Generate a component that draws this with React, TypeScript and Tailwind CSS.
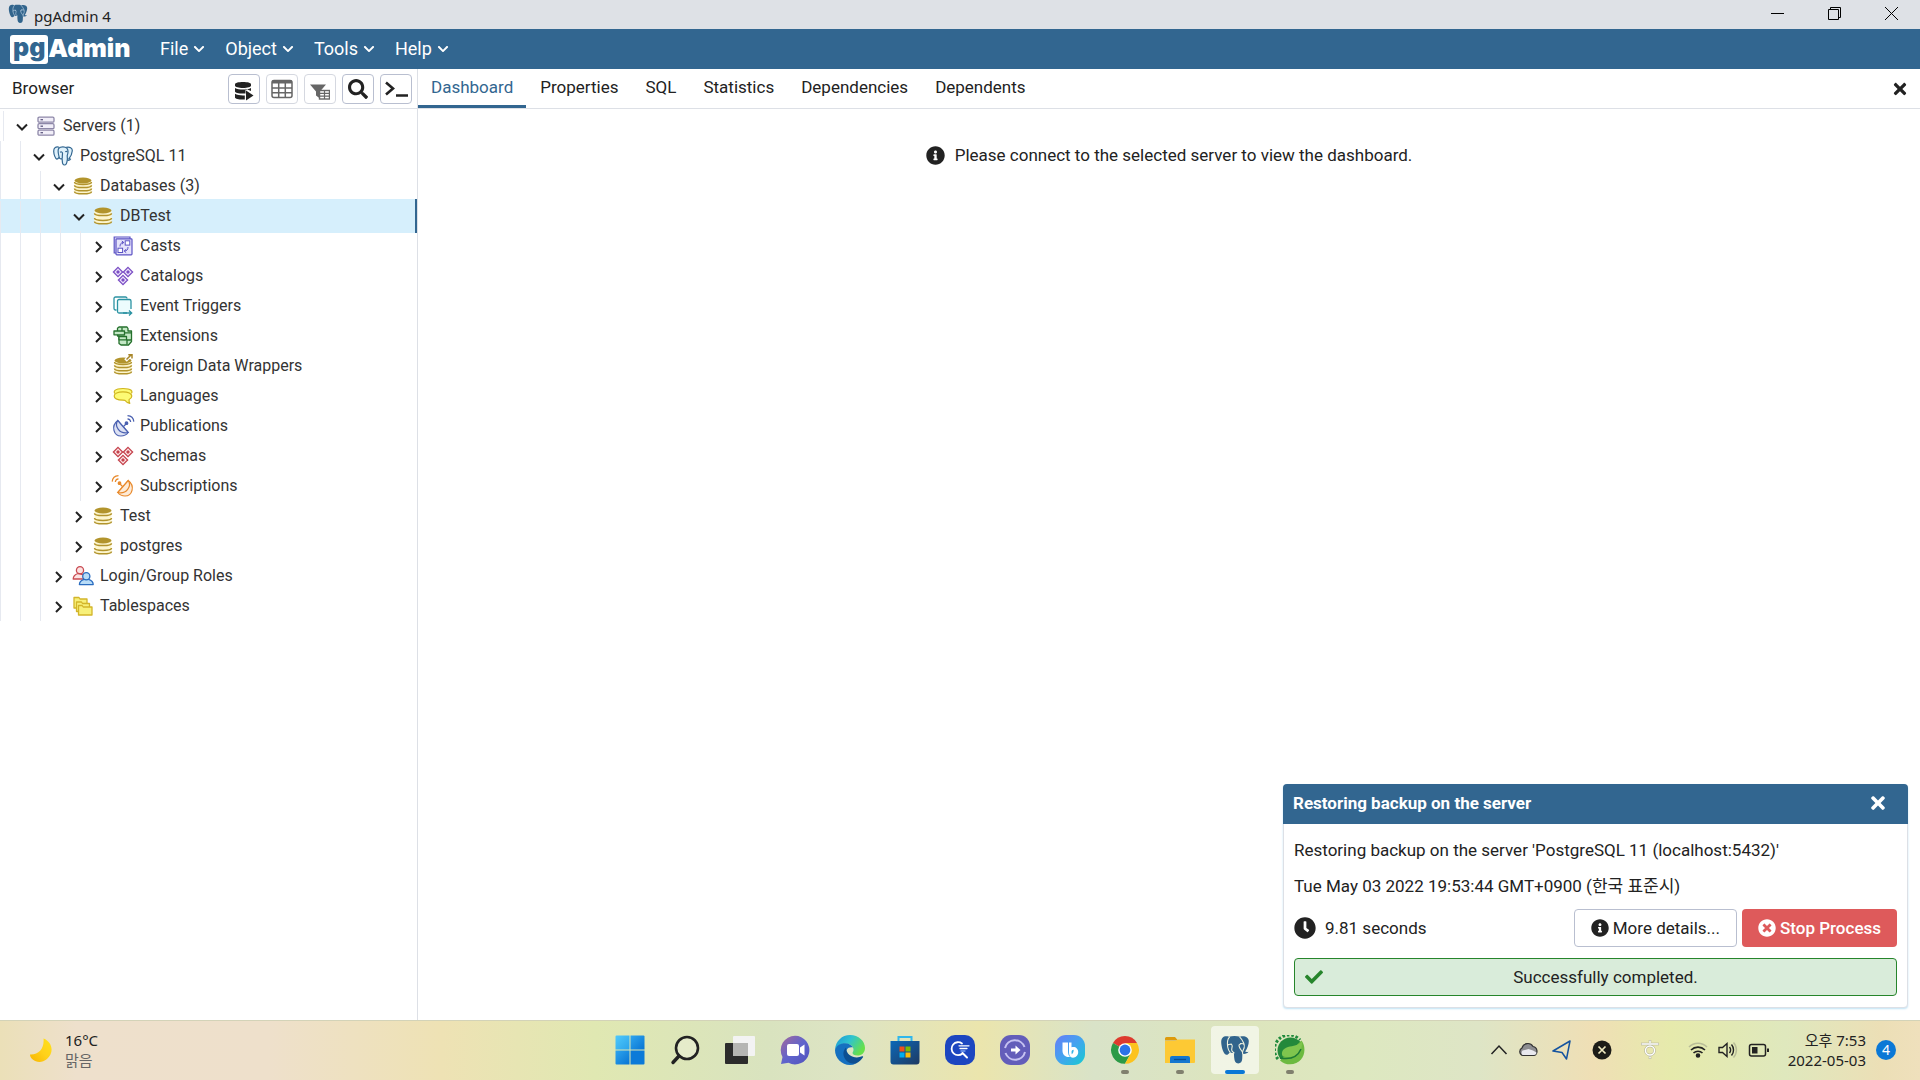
import React from "react";
import {
  FaCheck,
  FaChevronDown,
  FaClock,
  FaInfoCircle,
  FaSearch,
  FaTimes,
  FaTimesCircle,
} from "react-icons/fa";

const svg = "h-5 w-5 overflow-visible";

function ServersIcon() {
  return (
    <svg viewBox="0 0 20 20" className={svg} fill="#f1eef8" stroke="#8d87a8" strokeWidth="1.3">
      {[1.2, 7.7, 14.2].map((y) => (
        <g key={y}>
          <rect x="2" y={y} width="16" height="5" rx="1.2" />
          <path d={`M4.5 ${y + 2.5}h2.5`} stroke="#5f5980" />
        </g>
      ))}
    </svg>
  );
}

function ElephantIcon() {
  return (
    <svg viewBox="0 0 20 20" className={svg} fill="#dff1fb" stroke="#336791" strokeWidth="1.2" strokeLinejoin="round">
      <path d="M6.2 1.2C3 .2.6 1.700.7 5.200c.1 3 1.500 7.600 3.100 7.900 1 .2 1.800-1 2.700-2.100M13.200 1.300c3.600-.7 6.300.6 6.100 3.500-.2 2.900-2 6.500-3.500 8.200l1.800.1c-.5 1-1.800 1.400-3.300 1.200" />
      <path d="M5.800 2.200C7.500.6 12 .3 13.800 2.200c1.600 1.800 1.400 4.800.4 7.600l.2 3.200c-.3 2.800-.5 5.700-2.500 6-2 .2-2.500-1.600-2.600-4l-.2-2.500c-1 .8-2.500.3-2.900-1.200C5.500 8.500 4.200 4.500 5.800 2.200z" />
      <path d="M7 6.200c1.200-.7 2.500-.2 2.500 1 0 1.600-.3 2.800-.2 5M12.300 5.800c.8-.5 1.600-.3 2 .2" fill="none" />
    </svg>
  );
}

function SolidElephant({ className, seam }: { className: string; seam: string }) {
  return (
    <svg viewBox="0 0 30 30" className={className} strokeLinejoin="round" strokeLinecap="round">
      <path
        d="M9 1.800C4.500.3 1.200 2.300 1.200 7c0 4.500 2.300 12.300 5 12.800 1.500.3 2.600-1.200 3.800-2.600 1 .8 2.500 1 3.800.6.3 1.200.2 3 .4 5 .3 3.700 1.500 5.700 4 5.700 2.600 0 3.800-1.600 4-4.400.2-1.900 0-3.900.3-5.300 2.600.4 5-.4 6-2-1.200.3-2.700.3-3.300-.2 2-3 3.700-7.300 3.600-10.600C28.600 2.500 24.500.3 20 1.800c-3.500-1-7.500-1-11 0z"
        fill="#31648c"
      />
      <g fill="none" stroke={seam} strokeWidth="1.100">
        <path d="M9.500 2.200C6.800 4.500 7.300 9 7.700 12c.3 2 1 3.500 2.300 5.200M19.800 2.200c3.300 3.300 5.200 8 4.400 10.600-.6 1.600-1.500 2.700-1.700 4.700 0 1 .2 1.300.2 1.300" />
        <path d="M7.500 10.200c2-1.600 4.500-1.200 4.700.5.200 2-1.200 3.500-.2 5.300.5 1 1.500 1.400 2 1.800M19 10c1-1.200 3.300-1.700 4.800-1M19 10c-.1 2.500 1.500 4.500 3.400 6.800" />
      </g>
      <g fill={seam}>
        <circle cx="11.200" cy="9.300" r=".8" />
        <circle cx="20.700" cy="8.800" r=".8" />
      </g>
    </svg>
  );
}

function DatabaseIcon({ arrow = false, tight = false }: { arrow?: boolean; tight?: boolean }) {
  const rows = tight ? [6, 9.2, 12.4] : [7.2, 12];
  return (
    <svg viewBox="0 0 20 20" className={svg}>
      <path d="M1.500 4.500v11c0 1.300 3.800 2.400 8.500 2.400s8.500-1.100 8.500-2.400v-11z" fill="#fdf6cf" />
      <ellipse cx="10" cy="4.500" rx="8.500" ry="2.900" fill="#b2942c" />
      {rows.map((y) => (
        <path key={y} d={`M1.500 ${y}c0 3.200 17 3.200 17 0`} fill="none" stroke="#b2942c" strokeWidth="1.500" />
      ))}
      <path d="M1.500 15.400c0 3.200 17 3.200 17 0" fill="none" stroke="#b2942c" strokeWidth="1.500" />
      {arrow && (
        <g>
          <path d="M12.500 4.500 17 0" stroke="#fff" strokeWidth="3.500" />
          <path d="M13.500 3.500 18-1M15.300-1.300h3.700v3.700" fill="none" stroke="#a8862a" strokeWidth="1.500" />
        </g>
      )}
    </svg>
  );
}

function CastsIcon() {
  return (
    <svg viewBox="0 0 20 20" className={svg} fill="#e6e4fb" stroke="#5b52c4" strokeWidth="1.200">
      <path d="M3 17H1.200V1H17v2" />
      <rect x="3" y="2.800" width="16" height="16" rx=".8" />
      <g strokeWidth="1">
        <rect x="12.200" y="4.800" width="4.600" height="4.300" fill="#fff" />
        <rect x="5" y="12.200" width="4.600" height="4.300" fill="#fff" />
        <path d="M7 10.500c0-2.500 1-4 3.500-4M8.800 5l2 1.500-2 1.800M15 11c0 2.600-1.200 4-3.600 4M13.200 13.200 11.200 15l2 1.700" fill="none" />
      </g>
    </svg>
  );
}

function DiamondsIcon({ color, tint }: { color: string; tint: string }) {
  return (
    <svg viewBox="0 0 20 20" className={svg}>
      {[
        [5, 6],
        [15, 6],
        [10, 14],
      ].map(([x, y]) => (
        <g key={x}>
          <path d={`M${x} ${y - 4.600}l4.600 4.600-4.600 4.600-4.600-4.600z`} fill={tint} stroke={color} strokeWidth="1.300" />
          <path d={`M${x} ${y - 2}l2 2-2 2-2-2z`} fill={color} />
        </g>
      ))}
    </svg>
  );
}

function EventTriggersIcon() {
  return (
    <svg viewBox="0 0 20 20" className={svg} stroke="#2c93a3" strokeWidth="1.300" fill="none">
      <path d="M3.500 14H2.500A1.500 1.500 0 0 1 1 12.500v-10A1.500 1.500 0 0 1 2.500 1h10A1.500 1.500 0 0 1 14 2.500" />
      <path d="M18 13V5a1.500 1.500 0 0 0-1.500-1.500H6A1.500 1.500 0 0 0 4.500 5v10.500A1.500 1.500 0 0 0 6 17h8" fill="#ecfcfd" />
      <path d="M10 17h8.500M16 14.500l2.700 2.500-2.700 2.500" />
    </svg>
  );
}

function ExtensionsIcon() {
  return (
    <svg viewBox="0 0 20 20" className={svg} stroke="#25702c" strokeWidth="1.300" fill="#c4e8c6" strokeLinejoin="round">
      <path d="M4.500 5V2.200L6 1h8l1 1.500V5h3.500v10.500L15.500 19H8l-2-1.500V10H4.500z" />
      <path d="M1 5h10.500v3.800H1zM6 10.500h7.500v3.300H6zM11.500 6.800h7M18.500 14H14v4.500M9 1.500V5" />
    </svg>
  );
}

function LanguagesIcon() {
  return (
    <svg viewBox="0 0 20 20" className={svg} stroke="#d0b520" strokeWidth="1.200" fill="#fdfb74" strokeLinejoin="round">
      <path d="M2 7.500C.3 6 1 2.500 10 2.500s9.800 3.200 8.400 4.800" />
      <path d="M10 5.800c-5 0-8.800 1.600-8.800 4.200s3.300 4.200 8.800 4.200l2 .1c1.300 1.600 3 2.700 4.800 3.100-.7-1.300-.9-2.600-.7-3.900 1.600-.8 2.700-2 2.700-3.500C18.800 7.400 15 5.800 10 5.800z" />
    </svg>
  );
}

function DishIcon({ color, tint, flip = false }: { color: string; tint: string; flip?: boolean }) {
  return (
    <svg viewBox="0 0 20 20" className={svg}>
      <g transform={flip ? "translate(20 0) scale(-1 1)" : undefined} stroke={color} strokeWidth="1.200" fill="none">
        <path d="M4.800 4.500C-2.500 10 .8 20 8 20c3 0 5.500-1.300 7.200-3.500z" fill={tint} />
        <path d="M4.800 4.500C1 10 6.500 18.500 15.200 16.500z" fill={tint} />
        <path d="M10.500 10.500l3-3" />
        <circle cx="13.500" cy="7.200" r="1.300" fill={color} />
        <path d="M14.500 2.800c1.800.2 3 1.400 3.200 3.200M14.500-.4c3.600.2 6 2.600 6.300 6" />
      </g>
    </svg>
  );
}

function RolesIcon() {
  return (
    <svg viewBox="0 0 20 20" className={svg} strokeWidth="1.300" strokeLinejoin="round">
      <g fill="#fbe3e3" stroke="#c94b52">
        <circle cx="7" cy="4.200" r="3.600" />
        <path d="M5 7.500C2 8.500.3 10 .2 13h12V9z" />
      </g>
      <g fill="#b8dcf7" stroke="#2a6cc0">
        <path d="M11 13.300c-3 .9-4.500 2.300-4.600 5.300h13.800c-.1-3-1.600-4.400-4.600-5.300z" />
        <circle cx="13.300" cy="10.200" r="3.600" />
      </g>
    </svg>
  );
}

function TablespacesIcon() {
  return (
    <svg viewBox="0 0 20 20" className={svg} stroke="#d3b52a" strokeWidth="1.300" fill="#f7f07a" strokeLinejoin="round">
      <path d="M1 12V1.500h5L7 3h7v9z" />
      <path d="M3.500 15.500V6h5l1 1.500h7v8z" />
      <path d="M5.500 19V9.500h3.700L10.200 11H19v8z" />
    </svg>
  );
}

type Node = { level: number; label: string; open?: boolean; selected?: boolean; icon: React.ReactNode };

const nodes: Node[] = [
  { level: 0, label: "Servers (1)", open: true, icon: <ServersIcon /> },
  { level: 1, label: "PostgreSQL 11", open: true, icon: <ElephantIcon /> },
  { level: 2, label: "Databases (3)", open: true, icon: <DatabaseIcon tight /> },
  { level: 3, label: "DBTest", open: true, selected: true, icon: <DatabaseIcon /> },
  { level: 4, label: "Casts", icon: <CastsIcon /> },
  { level: 4, label: "Catalogs", icon: <DiamondsIcon color="#7b4fc4" tint="#eadffa" /> },
  { level: 4, label: "Event Triggers", icon: <EventTriggersIcon /> },
  { level: 4, label: "Extensions", icon: <ExtensionsIcon /> },
  { level: 4, label: "Foreign Data Wrappers", icon: <DatabaseIcon tight arrow /> },
  { level: 4, label: "Languages", icon: <LanguagesIcon /> },
  { level: 4, label: "Publications", icon: <DishIcon color="#4a60b0" tint="#dce1f3" /> },
  { level: 4, label: "Schemas", icon: <DiamondsIcon color="#c5434d" tint="#fbe2e3" /> },
  { level: 4, label: "Subscriptions", icon: <DishIcon color="#e8892b" tint="#fdebd8" flip /> },
  { level: 3, label: "Test", icon: <DatabaseIcon /> },
  { level: 3, label: "postgres", icon: <DatabaseIcon /> },
  { level: 2, label: "Login/Group Roles", icon: <RolesIcon /> },
  { level: 2, label: "Tablespaces", icon: <TablespacesIcon /> },
];

function TreeRow({ node }: { node: Node }) {
  return (
    <li
      role="treeitem"
      aria-level={node.level + 1}
      aria-expanded={!!node.open}
      aria-selected={!!node.selected}
      className={`relative isolate flex h-[30px] items-stretch ${node.level === 0 ? "pl-[3px]" : ""}`}
    >
      {node.selected && (
        <span className="absolute inset-x-0 -top-0.5 -bottom-0.5 -z-10 border-r-2 border-[#326690] bg-[#d6effc]" />
      )}
      {Array.from({ length: node.level }, (_, i) => (
        <span key={i} className="w-5 border-l border-[#e6e9f0]" />
      ))}
      <span className="w-2.5 border-l border-[#e6e9f0]" />
      <button aria-label={`Toggle ${node.label}`} className="flex w-[18px] items-center justify-center pt-0.5">
        <svg viewBox="0 0 12 12" className="h-3 w-3" fill="none" stroke="#222" strokeWidth="2">
          <path d={node.open ? "M1 3.500l5 5 5-5" : "M3 1l5 5-5 5"} />
        </svg>
      </button>
      <span className="ml-[5px] flex items-center">{node.icon}</span>
      <span className="ml-[7px] flex items-center text-base whitespace-nowrap text-[#333]">{node.label}</span>
    </li>
  );
}

function QueryToolIcon() {
  return (
    <svg viewBox="0 0 20 20" className="mt-1 h-5 w-5" fill="#222">
      <path d="M1 3.200C1 1.900 4.600 1 9 1s8 .9 8 2.200v1.600C17 6 13.400 7 9 7S1 6 1 4.800z" />
      <path d="M1 7c1.800 1.200 5 1.600 8 1.600s6.200-.4 8-1.600v3l-5.500-2.300v4.700L9 12.600c-4.400 0-8-1-8-2.200z" />
      <path d="M1 12.800c1.800 1.200 5 1.600 8 1.600h1.800v4.200H9c-4.400 0-8-1-8-2.200z" />
      <path d="M12 9.500l7.500 5-7.500 5z" />
    </svg>
  );
}

function GridIcon() {
  return (
    <svg viewBox="0 0 22 20" className="h-5 w-[22px]" fill="none" stroke="#666" strokeWidth="1.500">
      <rect x="1" y="1.500" width="20" height="17" rx="2" />
      <path d="M1 3h20" strokeWidth="3" />
      <path d="M1 9h20M1 13.800h20M7.700 3v15.500M14.300 3v15.500" />
    </svg>
  );
}

function FilterGridIcon() {
  return (
    <svg viewBox="0 0 20 16" className="mt-1.5 h-4 w-5" stroke="#666">
      <path d="M0 .5h16L10 7.500v7l-4-3v-4z" fill="#666" stroke="none" />
      <rect x="9.500" y="6.500" width="10" height="8.500" fill="#fff" strokeWidth="1.400" />
      <path d="M9.500 9.300h10M9.500 12.200h10M14.500 6.500V15" fill="none" strokeWidth="1.200" />
    </svg>
  );
}

function TerminalIcon() {
  return (
    <svg viewBox="0 0 24 20" className="h-5 w-6" fill="none" stroke="#222" strokeWidth="2.600">
      <path d="M2 3.500l7 6-7 6M12 16.500h12" />
    </svg>
  );
}

const tools = [
  { label: "Query Tool", dim: false, icon: <QueryToolIcon /> },
  { label: "View Data", dim: true, icon: <GridIcon /> },
  { label: "Filtered Rows", dim: true, icon: <FilterGridIcon /> },
  { label: "Search Objects", dim: false, icon: <FaSearch className="h-5 w-5" /> },
  { label: "PSQL Tool", dim: false, icon: <TerminalIcon /> },
];

const tabs = ["Dashboard", "Properties", "SQL", "Statistics", "Dependencies", "Dependents"];

function Notice() {
  return (
    <section
      aria-label="Background process"
      className="absolute right-3 bottom-3 w-[625px] rounded-sm border border-[#dde0e6] bg-white text-[17px] leading-6 text-[#222] shadow-[0_1px_2px_#bfe3f5]"
    >
      <header className="-mx-px -mt-px flex h-10 items-center justify-between rounded-t-sm bg-[#326690] pr-[22px] pb-0.5 pl-2.5 font-bold text-white">
        <h2>Restoring backup on the server</h2>
        <button aria-label="Close">
          <FaTimes className="h-5 w-4" />
        </button>
      </header>
      <div className="flex flex-col px-2.5 pt-3.5 pb-[11px]">
        <p>Restoring backup on the server 'PostgreSQL 11 (localhost:5432)'</p>
        <p className="mt-3">Tue May 03 2022 19:53:44 GMT+0900 (한국 표준시)</p>
        <div className="mt-[11px] flex items-center gap-[5px]">
          <FaClock className="h-[22px] w-[22px]" />
          <span className="ml-1 flex-1">9.81 seconds</span>
          <button className="flex h-[38px] items-center gap-1 rounded border border-[#b9bfd0] px-4">
            <FaInfoCircle className="h-[18px] w-[18px]" />
            More details...
          </button>
          <button className="flex h-[38px] items-center gap-1 rounded bg-[#de5a5b] px-4 font-medium text-white">
            <FaTimesCircle className="h-[18px] w-[18px]" />
            Stop Process
          </button>
        </div>
        <div className="mt-[11px] flex h-[38px] items-center rounded border border-[#26852b] bg-[#d9ecda] pr-2 pl-2.5">
          <FaCheck className="h-[18px] w-[18px] text-[#26852b]" />
          <span className="flex-1 text-center">Successfully completed.</span>
        </div>
      </div>
    </section>
  );
}

/* Taskbar icons */

const tb = "h-[30px] w-[30px]";

function StartIcon() {
  return (
    <svg viewBox="0 0 30 30" className={tb}>
      <defs>
        <linearGradient id="win" x1="0" y1="0" x2="1" y2="1">
          <stop offset="0" stopColor="#4fc9fb" />
          <stop offset="1" stopColor="#2ba3ea" />
        </linearGradient>
        <linearGradient id="win2" x1="0" y1="0" x2="1" y2="1">
          <stop offset="0" stopColor="#2ea5ee" />
          <stop offset="1" stopColor="#0874d3" />
        </linearGradient>
      </defs>
      <path d="M.5 1.500a1 1 0 0 1 1-1h13v14H.5z" fill="url(#win)" />
      <path d="M15.500.5h13a1 1 0 0 1 1 1v13h-14z" fill="url(#win2)" />
      <path d="M.5 15.500h14v14h-13a1 1 0 0 1-1-1z" fill="url(#win2)" />
      <path d="M15.500 15.500h14v13a1 1 0 0 1-1 1h-13z" fill="#0b7ad8" />
    </svg>
  );
}

function TaskSearchIcon() {
  return (
    <svg viewBox="0 0 30 30" className={tb} fill="none" stroke="#222" strokeLinecap="round">
      <circle cx="17" cy="13" r="11" strokeWidth="2.600" fill="#fff" fillOpacity=".25" />
      <path d="M9 21l-6 6.500" strokeWidth="3.400" />
    </svg>
  );
}

function TaskViewIcon() {
  return (
    <svg viewBox="0 0 30 30" className={tb}>
      <rect x="0" y="8" width="23" height="21" rx="1" fill="#2c2c2c" />
      <rect x="8" y="1" width="22" height="20" rx="1" fill="#f3f3f3" />
      <path d="M8 8h15v13H8z" fill="#b5b5b3" />
    </svg>
  );
}

function ChatIcon() {
  return (
    <svg viewBox="0 0 30 30" className={tb}>
      <defs>
        <linearGradient id="chat" x1="0" y1="0" x2="1" y2="1">
          <stop offset="0" stopColor="#a5699b" />
          <stop offset=".5" stopColor="#6064cc" />
          <stop offset="1" stopColor="#5152bd" />
        </linearGradient>
      </defs>
      <path d="M15 .8a14.300 14.300 0 1 1-6.500 27L1 29l1.500-7A14.300 14.300 0 0 1 15 .8z" fill="url(#chat)" />
      <rect x="7" y="9" width="12" height="12" rx="2" fill="#fff" />
      <path d="M20 12.500l4.500-3v11l-4.500-3z" fill="#fff" />
    </svg>
  );
}

function EdgeIcon() {
  return (
    <svg viewBox="0 0 30 30" className={tb}>
      <defs>
        <linearGradient id="edgeTop" x1="0" y1="0" x2="1" y2=".5">
          <stop offset="0" stopColor="#1a93d8" />
          <stop offset=".5" stopColor="#2fc3cf" />
          <stop offset="1" stopColor="#66e04b" />
        </linearGradient>
      </defs>
      <path d="M0 15C.5 6 7 0 15 0c8.500 0 15 6 15 13 0 5-3.500 7.500-7.500 7.500-3.300 0-5-1.500-5-2.500 0-.8 1-1.200 1-3.500 0-2.800-3-6-8-6C5 8.500 1.500 11.500 0 15z" fill="url(#edgeTop)" />
      <path d="M0 15c1-4 5-6.700 10.500-6.700 3 0 6 1.700 7.500 4-5.500-1-7.500 3-7 7 .7 6 6 9 10 9.200-2 1-4 1.500-6 1.500C6.500 30 0 23 0 15z" fill="#1570c0" />
      <path d="M11 12.500c-3.500 3.500-3.500 9 .5 13.200 2.500 2.500 6.500 3.500 9.500 2.800 3-1.300 5.500-3.700 7-6.200.4-.8-.2-1.300-.9-1-6 2.700-15.600.7-16.100-8.800z" fill="#0d4f92" />
    </svg>
  );
}

function StoreIcon() {
  return (
    <svg viewBox="0 0 30 30" className={tb}>
      <defs>
        <linearGradient id="store" x1="0" y1="0" x2="1" y2="1">
          <stop offset="0" stopColor="#0b68b8" />
          <stop offset="1" stopColor="#1f3a62" />
        </linearGradient>
      </defs>
      <path d="M8.500 8V2h13v6" fill="none" stroke="#31b7ec" strokeWidth="2" />
      <path d="M.5 6h29v20.500a3 3 0 0 1-3 3h-23a3 3 0 0 1-3-3z" fill="url(#store)" />
      <path d="M9.500 11.500h5v5h-5z" fill="#f1511b" />
      <path d="M15.500 11.500h5v5h-5z" fill="#80bb01" />
      <path d="M9.500 17.500h5v5h-5z" fill="#00adef" />
      <path d="M15.500 17.500h5v5h-5z" fill="#fbbc09" />
    </svg>
  );
}

function QuickSearchIcon() {
  return (
    <svg viewBox="0 0 30 30" className={tb} fill="none" stroke="#fff" strokeLinecap="round">
      <rect width="30" height="30" rx="10" fill="#1c46c0" stroke="none" />
      <path d="M17 8.500A6.500 6.500 0 1 0 17.500 18.500" strokeWidth="1.800" />
      <path d="M17.500 18l4.500 4.500" strokeWidth="2" />
      <path d="M14 10.800h10M15 13.500h7" strokeWidth="1.300" />
      <path d="M16 16h4" strokeWidth="1.300" stroke="#7ba2f0" />
    </svg>
  );
}

function SwitchIcon() {
  return (
    <svg viewBox="0 0 30 30" className={tb} fill="none" stroke="#c6c2f2" strokeWidth="2">
      <rect width="30" height="30" rx="11" fill="#635dba" stroke="none" />
      <path d="M5 13a10.200 10.200 0 0 1 19.500-1M25 17a10.200 10.200 0 0 1-19.500 1" />
      <path d="M11 13.500h4.500v-3l5 4.500-5 4.500v-3H11z" fill="#fff" stroke="none" />
    </svg>
  );
}

function BixbyIcon() {
  return (
    <svg viewBox="0 0 30 30" className={tb}>
      <defs>
        <linearGradient id="bixby" x1="0" y1="0" x2="1" y2="1">
          <stop offset="0" stopColor="#6a7cf7" />
          <stop offset=".5" stopColor="#42a4ef" />
          <stop offset="1" stopColor="#16cbd0" />
        </linearGradient>
      </defs>
      <rect width="30" height="30" rx="11" fill="url(#bixby)" />
      <path d="M7.500 7.500h5.500v8.500c0 2.500.5 4.500 2 6-5 .5-8-2.500-7.500-8z" fill="#fff" />
      <path d="M14 7.500h2.500v4.800c3.500-1.200 6.700 1 6.700 4.800 0 3.300-2.300 5.600-5.200 5.600s-4-2.500-4-5.700z" fill="#fff" />
      <path d="M16.500 17c0-1.500 1-2.300 2.200-2.300 0 2-.7 3.500-2 4.500z" fill="#35b3e6" />
    </svg>
  );
}

function ChromeIcon() {
  return (
    <svg viewBox="0 0 30 30" className={tb}>
      <path d="M15 15 3 8a13.800 13.800 0 0 1 24 0z" fill="#dd3a2e" />
      <path d="M15 15 3 8a13.800 13.800 0 0 0 12 20.800L21 18z" fill="#2b9a46" />
      <path d="M15 8h12a13.800 13.800 0 0 1-12 20.800L21 18z" fill="#fcc31e" />
      <circle cx="15" cy="15" r="6.800" fill="#fff" />
      <circle cx="15" cy="15" r="5.400" fill="#2b73e8" />
    </svg>
  );
}

function ExplorerIcon() {
  return (
    <svg viewBox="0 0 30 30" className={tb}>
      <path d="M0 3.500A1.500 1.500 0 0 1 1.500 2H10l3 3.500H0z" fill="#dd9a0c" />
      <path d="M0 6h10l3-1.500h17V27a1 1 0 0 1-1 1H0z" fill="#fdc934" />
      <path d="M5 28v-5a2 2 0 0 1 2-2h16a2 2 0 0 1 2 2v5z" fill="#1577cf" />
      <path d="M9 24.500h12" stroke="#0b4f94" strokeWidth="1.300" />
    </svg>
  );
}

function SpringIcon() {
  return (
    <svg viewBox="0 0 30 30" className={tb}>
      <path d="M3 24A14 14 0 0 1 25 5" fill="none" stroke="#1f8a3c" strokeWidth="3" strokeDasharray="2.600 1.800" />
      <circle cx="15.500" cy="15.500" r="13" fill="#23893b" />
      <path d="M26.500 5.500C30.500 11 30.500 19 26 24.500S11.500 31.500 5 25.500z" fill="#6cba40" />
      <path d="M27 6c-3 5-9 4.500-14 6C7.500 13.800 5.500 18 8 21.500c8 1.500 14.500-.5 17.500-6 1.300-3 1.700-6 1.500-9.500z" fill="#7fc54e" />
      <path d="M5 23c8 1.500 17 .5 21-9" fill="none" stroke="#1d7a35" strokeWidth="1.500" />
    </svg>
  );
}

const apps = [
  { label: "Start", icon: <StartIcon /> },
  { label: "Search", icon: <TaskSearchIcon /> },
  { label: "Task View", icon: <TaskViewIcon /> },
  { label: "Chat", icon: <ChatIcon /> },
  { label: "Edge", icon: <EdgeIcon /> },
  { label: "Store", icon: <StoreIcon /> },
  { label: "Quick Search", icon: <QuickSearchIcon /> },
  { label: "Quick Switch", icon: <SwitchIcon /> },
  { label: "Bixby", icon: <BixbyIcon /> },
  { label: "Chrome", icon: <ChromeIcon />, running: true },
  { label: "File Explorer", icon: <ExplorerIcon />, running: true },
  { label: "pgAdmin 4", icon: <SolidElephant className={tb} seam="#eef1dd" />, active: true },
  { label: "Spring", icon: <SpringIcon />, running: true },
];

function Taskbar() {
  return (
    <footer className="grid h-[60px] grid-cols-[1fr_auto_1fr] items-center border-t border-[#d3d3b8] bg-[linear-gradient(90deg,#ebe0b8_0%,#eee0cc_4%,#eee0cb_14%,#eee2b4_23%,#e0e8b2_31%,#d9e3bf_40%,#dde4c4_44%,#ebe5ad_51%,#d9e3c8_57%,#dde5bd_65%,#dde8c0_71%,#dee5c6_77%,#efdfb5_83%,#e6eaac_87%,#dfe8bd_93%,#ecdfb6_98%,#efe0bc_100%)] pb-0.5 font-['Noto_Sans','Noto_Sans_CJK_KR',sans-serif] text-[15px] leading-5 text-[#222]">
      <div className="flex items-center gap-[13px] pl-7">
        <svg viewBox="0 0 24 24" className="h-6 w-6">
          <defs>
            <linearGradient id="moon" x1="1" y1="0" x2="0" y2="1">
              <stop offset="0" stopColor="#ffe21a" />
              <stop offset=".5" stopColor="#ffd11a" />
              <stop offset="1" stopColor="#f7b500" />
            </linearGradient>
          </defs>
          <path d="M15.500.5c9 3.500 11 14 3.500 20.500S2 22 2 16.500C11 17 16.500 10 15.500.5z" fill="url(#moon)" />
        </svg>
        <div>
          <p>16°C</p>
          <p className="text-[#666]">맑음</p>
        </div>
      </div>
      <nav aria-label="Applications" className="flex gap-[7px]">
        {apps.map((a) => (
          <button
            key={a.label}
            aria-label={a.label}
            className={`relative flex h-12 w-12 items-center justify-center rounded ${a.active ? "bg-white/60" : ""}`}
          >
            {a.icon}
            {a.running && <span className="absolute bottom-0 h-1 w-2 rounded-full bg-[#80806e]" />}
            {a.active && <span className="absolute bottom-0 h-1 w-5 rounded-full bg-[#0a78d6]" />}
          </button>
        ))}
      </nav>
      <div className="flex items-center justify-end pr-6">
        <svg viewBox="0 0 18 18" className="h-[18px] w-[18px]" fill="none" stroke="#222" strokeWidth="1.500">
          <path d="M1.500 13 9 5l7.500 8" />
        </svg>
        <svg viewBox="0 0 20 20" className="ml-2.5 h-5 w-5">
          <path d="M5 15.500a4 4 0 0 1-1-7.500 6 6 0 0 1 11-1.500 4.700 4.700 0 0 1 1 9z" fill="#8d8d90" stroke="#333" strokeWidth="1.200" />
          <path d="M4.500 15a3.500 3.500 0 0 1 0-4.500l6-1.500 4.500 1.500 3.500 2c0 1.500-1 2.500-2.500 2.500z" fill="#e9e9ee" />
        </svg>
        <svg viewBox="0 0 20 20" className="ml-3.5 h-5 w-5" fill="none" stroke="#14539f" strokeWidth="1.500" strokeLinejoin="round">
          <path d="M18 1 1 11l9 1.500L14.500 19z" />
        </svg>
        <svg viewBox="0 0 20 20" className="ml-5 h-5 w-5">
          <circle cx="10" cy="10" r="9.500" fill="#1c1c18" />
          <path d="M6.500 6.500l7 7m0-7l-7 7" stroke="#eee9c0" strokeWidth="1.700" />
        </svg>
        <svg viewBox="0 0 20 20" className="ml-7 h-5 w-5" fill="none" stroke="#a9a990" strokeWidth="2.400">
          <g>
            <path d="M10 0v3M1 4h18M10 16v3" />
            <circle cx="10" cy="10.500" r="4.500" />
          </g>
          <g stroke="#fff" strokeWidth="1.500">
            <path d="M10 .5v2.500M1.500 4h17M10 16.500v2" />
            <circle cx="10" cy="10.500" r="4.500" />
          </g>
        </svg>
        <svg viewBox="0 0 20 20" className="ml-7 h-5 w-5" fill="none" stroke="#222" strokeWidth="1.600">
          <path d="M1 7a12.700 12.700 0 0 1 18 0" stroke="#b9bd98" />
          <path d="M3 10a10 10 0 0 1 14 0M5.500 13a6.500 6.500 0 0 1 9 0" />
          <circle cx="10" cy="15.500" r="1.500" fill="#222" />
        </svg>
        <svg viewBox="0 0 20 20" className="ml-2.5 h-5 w-5" fill="none" stroke="#222" strokeWidth="1.400">
          <path d="M1 7.500v5h3.500L9 16.500v-13L4.500 7.500z" />
          <path d="M11.500 7a5 5 0 0 1 0 6M13.500 4.500a8.500 8.500 0 0 1 0 11" />
          <path d="M15.500 2.500a11 11 0 0 1 0 15" stroke="#b9bd98" />
        </svg>
        <svg viewBox="0 0 22 20" className="ml-2.5 h-5 w-[22px]" fill="none" stroke="#222" strokeWidth="1.500">
          <rect x="1.500" y="4.500" width="16" height="11.500" rx="2" />
          <path d="M4 7h5.500v6.500H4z" fill="#222" stroke="none" />
          <path d="M19 8.500h2v3.500h-2z" fill="#222" stroke="none" />
        </svg>
        <div className="ml-[18px] text-right">
          <p>오후 7:53</p>
          <p>2022-05-03</p>
        </div>
        <span className="ml-2.5 flex h-5 w-5 items-center justify-center rounded-full bg-[#0a78d6] text-sm text-white">
          4
        </span>
      </div>
    </footer>
  );
}

export default function App() {
  return (
    <div className="flex h-screen flex-col bg-white font-[Roboto,'Noto_Sans_CJK_KR',sans-serif] text-[#222]">
      <header className="flex h-[29px] items-center bg-[#dee1e6] pl-2">
        <SolidElephant className="mb-0.5 h-5 w-5" seam="#a9c3d8" />
        <h1 className="ml-1.5 flex-1 pt-0.5 font-['Noto_Sans',sans-serif] text-[15px] leading-5">pgAdmin 4</h1>
        <div className="flex items-center gap-11 pr-[22px] pb-0.5 text-black">
          <button aria-label="Minimize">
            <svg viewBox="0 0 13 13" className="h-[13px] w-[13px]" stroke="currentColor">
              <path d="M0 6.500h13" />
            </svg>
          </button>
          <button aria-label="Restore">
            <svg viewBox="0 0 13 13" className="h-[13px] w-[13px]" fill="none" stroke="currentColor">
              <path d="M.5 2.500h10v10H.5zM2.500 2.500v-2h10v10h-2" />
            </svg>
          </button>
          <button aria-label="Close window">
            <svg viewBox="0 0 13 13" className="h-[13px] w-[13px]" stroke="currentColor">
              <path d="M0 0l13 13M13 0L0 13" />
            </svg>
          </button>
        </div>
      </header>

      <div className="flex h-10 items-center bg-[#326690] pl-2.5 text-white">
        <div className="flex w-[120px] items-center font-[Inter,sans-serif] text-[25px] leading-7 font-black">
          <span className="flex h-[29px] items-center rounded-[3px] bg-white px-[3px] pb-1 text-[#326690]">pg</span>
          <span className="pb-0.5">Admin</span>
        </div>
        <nav aria-label="Main menu" className="ml-[30px] flex gap-5 text-lg">
          {["File", "Object", "Tools", "Help"].map((m) => (
            <button key={m} className="flex items-center gap-[5px]">
              {m}
              <FaChevronDown className="h-3 w-3" />
            </button>
          ))}
        </nav>
      </div>

      <main className="flex min-h-0 flex-1">
        <aside className="flex w-[418px] flex-col border-r border-[#dde0e6]">
          <div className="flex h-10 items-center justify-between border-b border-[#dde0e6] pr-[5px] pl-3">
            <h2 className="text-[17px]">Browser</h2>
            <div className="flex gap-1.5">
              {tools.map((t) => (
                <button
                  key={t.label}
                  aria-label={t.label}
                  className={`flex h-[30px] w-8 items-center justify-center rounded border ${t.dim ? "border-[#d5d8e0]" : "border-[#b9bfd0]"}`}
                >
                  {t.icon}
                </button>
              ))}
            </div>
          </div>
          <ul role="tree" aria-label="Object browser" className="pt-0.5">
            {nodes.map((n) => (
              <TreeRow key={n.label} node={n} />
            ))}
          </ul>
        </aside>

        <section className="relative flex flex-1 flex-col text-[17px]">
          <div className="flex h-10 items-center justify-between border-b border-[#dde0e6] pr-[13px]">
            <div role="tablist" className="flex h-full gap-px">
              {tabs.map((t, i) => (
                <button
                  key={t}
                  role="tab"
                  aria-selected={i === 0}
                  className={`border-b-[3px] px-[13px] pt-0.5 ${i === 0 ? "border-[#326690] text-[#326690]" : "border-transparent"}`}
                >
                  {t}
                </button>
              ))}
            </div>
            <button aria-label="Close panel">
              <FaTimes className="h-[18px] w-[14px]" />
            </button>
          </div>
          <p className="flex items-center justify-center gap-2.5 pt-[34px] leading-6">
            <FaInfoCircle className="h-[19px] w-[19px]" />
            Please connect to the selected server to view the dashboard.
          </p>
          <Notice />
        </section>
      </main>

      <Taskbar />
    </div>
  );
}
